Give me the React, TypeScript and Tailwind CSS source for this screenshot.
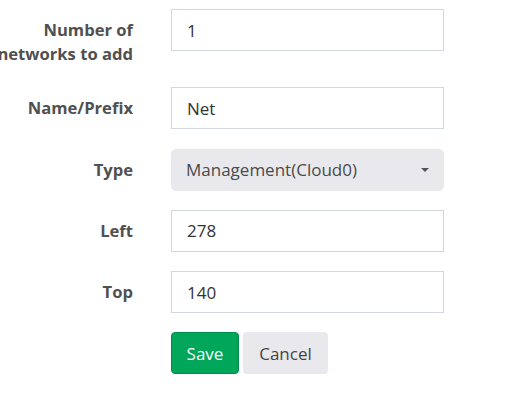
const font = { fontFamily: '"Open Sans", "Noto Sans", sans-serif' };

function Row({ label, children }: { label: React.ReactNode; children: React.ReactNode }) {
  return (
    <div className="flex items-start">
      <div className="flex w-[133px] shrink-0 justify-end pt-[9px] text-right text-[16.6px] font-bold leading-6 text-[#505050]">
        <span className="whitespace-nowrap">{label}</span>
      </div>
      <div className="ml-[38px] w-[273px]">{children}</div>
    </div>
  );
}

function TextInput({ value }: { value: string }) {
  return (
    <input
      defaultValue={value}
      className="block h-[42px] w-full border border-[#d2d6de] bg-white px-[15px] text-[17px] text-[#333] outline-none"
      style={font}
    />
  );
}

export default function App() {
  return (
    <div className="min-h-screen bg-white pt-[9px]" style={font}>
      <div className="flex flex-col gap-[19.3px]">
        <div className="pb-[2px]">
          <Row
            label={
              <>
                Number of
                <br />
                networks to add
              </>
            }
          >
            <TextInput value="1" />
          </Row>
        </div>
        <Row label="Name/Prefix">
          <TextInput value="Net" />
        </Row>
        <Row label="Type">
          <div className="flex h-[42px] w-full items-center justify-between rounded-[5px] bg-[#e9e9ed] pl-[15px] pr-[15px] text-[17px] text-[#4a4a4a]">
            <span>Management(Cloud0)</span>
            <span className="h-0 w-0 border-x-[4.5px] border-t-[4.5px] border-x-transparent border-t-[#555]" />
          </div>
        </Row>
        <Row label="Left">
          <TextInput value="278" />
        </Row>
        <Row label="Top">
          <TextInput value="140" />
        </Row>
        <div className="ml-[171px] flex gap-[4px]">
          <button className="h-[42px] w-[68px] rounded-[4px] border border-[#008d4c] bg-[#00a65a] text-[17px] text-white">
            Save
          </button>
          <button className="h-[42px] w-[85px] rounded-[4px] bg-[#e9e9ed] text-[17px] text-[#444]">
            Cancel
          </button>
        </div>
      </div>
    </div>
  );
}
